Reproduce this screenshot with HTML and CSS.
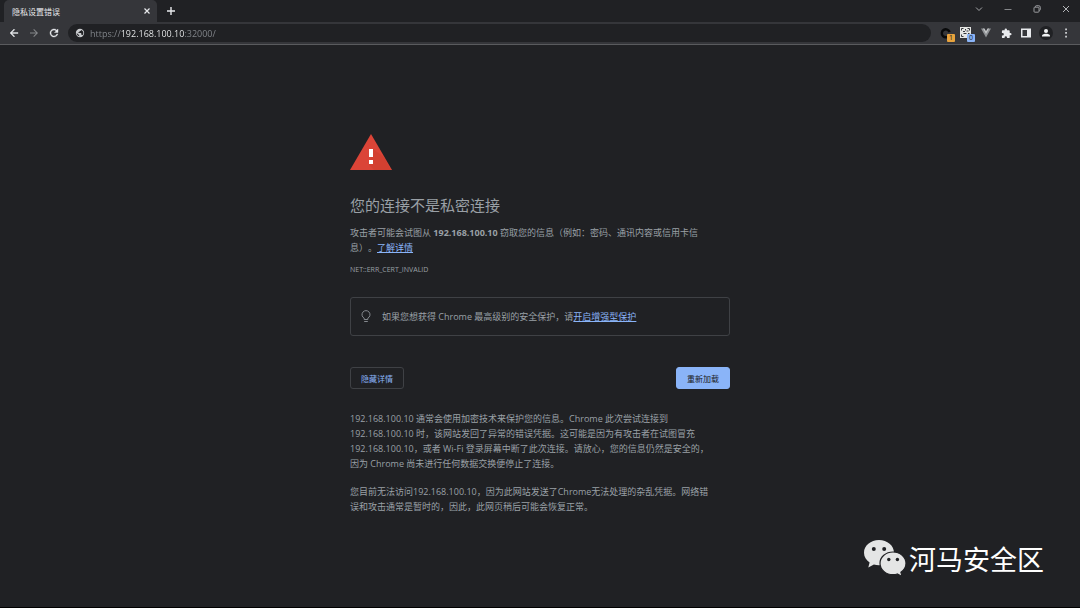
FILE: index.html
```html
<!DOCTYPE html>
<html lang="zh-CN">
<head>
    <meta charset="UTF-8">
    <meta name="viewport" content="width=device-width, initial-scale=1.0">
    <title>隐私设置错误</title>
    <link rel="stylesheet" href="styles.css">
</head>
<body>
    <header class="browser">
        <div class="tab-strip">
            <div class="tab">
                <span class="tab-title">隐私设置错误</span>
                <button class="icon-btn" aria-label="关闭标签页">
                    <svg width="8" height="8" viewBox="0 0 8 8"><path d="M1.5 1.5l5 5M6.500 1.500l-5 5" stroke="#e8eaed" stroke-width="1.2"/></svg>
                </button>
            </div>
            <button class="icon-btn new-tab" aria-label="新标签页">
                <svg width="10" height="10" viewBox="0 0 10 10"><path d="M5 1v8M1 5h8" stroke="#e8eaed" stroke-width="1.4"/></svg>
            </button>
            <div class="window-controls">
                <button class="icon-btn" aria-label="搜索标签页">
                    <svg width="10" height="10" viewBox="0 0 10 10"><path d="M2 3.500l3 3 3-3" fill="none" stroke="#a5a7aa"/></svg>
                </button>
                <button class="icon-btn" aria-label="最小化">
                    <svg width="10" height="10" viewBox="0 0 10 10"><path d="M1.500 5.500h7" stroke="#85878a"/></svg>
                </button>
                <button class="icon-btn" aria-label="还原">
                    <svg width="10" height="10" viewBox="0 0 10 10"><path d="M2 4q0-.8.8-.8h3.400q.8 0 .8.8v3.400q0 .8-.8.8h-3.400q-.8 0-.8-.8zM3.500 3V2.500q0-.8.8-.8h2.400q1.600 0 1.600 1.600v2.200q0 .9-1 .9" fill="none" stroke="#a5a7aa" stroke-width=".9"/></svg>
                </button>
                <button class="icon-btn" aria-label="关闭">
                    <svg width="10" height="10" viewBox="0 0 10 10"><path d="M2 2l6 6M8 2l-6 6" stroke="#c4c6c9" stroke-width=".9"/></svg>
                </button>
            </div>
        </div>

        <div class="toolbar">
            <button class="icon-btn" aria-label="后退">
                <svg width="12" height="12" viewBox="0 0 24 24"><path d="M20 11H7.830l5.590-5.590L12 4l-8 8 8 8 1.410-1.410L7.830 13H20z" fill="#e8eaed" stroke="#e8eaed" stroke-width=".8"/></svg>
            </button>
            <button class="icon-btn" aria-label="前进">
                <svg width="12" height="12" viewBox="0 0 24 24"><path d="M4 11h12.170l-5.590-5.590L12 4l8 8-8 8-1.410-1.410L16.170 13H4z" fill="#85878a"/></svg>
            </button>
            <button class="icon-btn" aria-label="重新加载此页">
                <svg width="12" height="12" viewBox="0 0 24 24"><path d="M17.650 6.350A8 8 0 1 0 19.730 14h-2.080A6 6 0 1 1 12 6c1.660 0 3.140.69 4.220 1.780L13 11h7V4z" fill="#e8eaed" stroke="#e8eaed" stroke-width=".8"/></svg>
            </button>
            <label class="omnibox">
                <svg width="10" height="10" viewBox="0 0 24 24" aria-hidden="true"><path d="M12 2a10 10 0 1 0 0 20 10 10 0 0 0 0-20zM11 19.900C7 19.400 4 16 4 12l5 4v1c0 1 1 2 2 2zm7-2.500c-.3-.8-1-1.400-2-1.400h-1v-3c0-.6-.4-1-1-1H8v-2h2c.6 0 1-.4 1-1V7h2c1.100 0 2-.9 2-2v-.4c3 1.200 5 4 5 7.400 0 2-.8 4-2 5.400z" fill="#c9cbce"/></svg>
                <input class="url" type="text" value="https://192.168.100.10:32000/" aria-label="地址和搜索栏" spellcheck="false">
            </label>
            <div class="extensions">
                <button class="icon-btn ext" aria-label="扩展程序一">
                    <svg width="12" height="12" viewBox="0 0 12 12"><path d="M9.200 8.400A4 4 0 1 1 9.600 5" fill="none" stroke="#08090a" stroke-width="2.400"/></svg>
                    <span class="badge badge-orange">1</span>
                </button>
                <button class="icon-btn ext" aria-label="扩展程序二">
                    <svg width="12" height="12" viewBox="0 0 12 12"><path d="M0 0h11v11H0z" fill="#e4e5e3"/><path d="M1.500 3.500v-2h2M7.500 1.500h2v2M1.500 7.500v2h2M3 4.500h2M6.500 4h2M5.500 2v1.500M3.500 6.500h3M8 6.500h1.500" fill="none" stroke="#34363a"/></svg>
                    <span class="badge badge-blue">0</span>
                </button>
                <button class="icon-btn ext" aria-label="Vue">
                    <svg width="12" height="12" viewBox="0 0 12 12"><path d="M1 1.500h3L6 5l2-3.500h3L6 10.500z" fill="#8e9194"/><path d="M3 1.500h1.500L6 4.200l1.500-2.700H9L6 7z" fill="#c5c7c9"/></svg>
                </button>
                <button class="icon-btn ext" aria-label="扩展程序">
                    <svg width="11" height="11" viewBox="0 0 24 24"><path d="M20.500 11H19V7a2 2 0 0 0-2-2h-4V3.500a2.500 2.500 0 0 0-5 0V5H4a2 2 0 0 0-2 2v3.800h1.500a2.700 2.700 0 0 1 0 5.400H2V20c0 1.100.9 2 2 2h3.800v-1.500a2.700 2.700 0 0 1 5.400 0V22H17a2 2 0 0 0 2-2v-4h1.500a2.500 2.500 0 0 0 0-5z" fill="#e8eaed"/></svg>
                </button>
                <button class="icon-btn ext" aria-label="侧边栏">
                    <svg width="12" height="12" viewBox="0 0 12 12"><path d="M1 1.500h10v9H1zM2.500 3v6H7V3z" fill="#e8eaed" fill-rule="evenodd"/></svg>
                </button>
                <button class="icon-btn ext" aria-label="用户">
                    <svg width="14" height="14" viewBox="0 0 14 14"><circle cx="7" cy="7" r="7" fill="#202124"/><circle cx="7" cy="5" r="2" fill="#f1f3f4"/><path d="M3 10.500V9.700C3 8.400 5.500 7.800 7 7.800s4 .6 4 1.900v.8z" fill="#f1f3f4"/></svg>
                </button>
                <button class="icon-btn ext" aria-label="菜单">
                    <svg width="12" height="12" viewBox="0 0 12 12"><path d="M5.200 1.500h1.700v1.700H5.200zM5.200 5.100h1.700v1.700H5.200zM5.200 8.700h1.700v1.700H5.200z" fill="#d5d7da"/></svg>
                </button>
            </div>
        </div>
    </header>

    <main class="interstitial">
        <svg class="warning-icon" width="42" height="36" viewBox="0 0 42 36" aria-hidden="true">
            <path d="M21 0l21 36H0z" fill="#db4437"/>
            <path d="M23 15l11 8 7 13H24l-5-5z" fill="#c53929" opacity=".35"/>
            <path d="M19 15h4v8h-4zM19 26h4v4h-4z" fill="#fff"/>
        </svg>

        <h1>您的连接不是私密连接</h1>
        <p>攻击者可能会试图从 <strong>192.168.100.10</strong> 窃取您的信息（例如：密码、通讯内容或信用卡信<br>息）。<a href="#">了解详情</a></p>
        <div class="error-code">NET::ERR_CERT_INVALID</div>

        <div class="suggestion">
            <svg width="10" height="14" viewBox="0 0 10 14" aria-hidden="true"><path d="M3.200 9.500V8.200A4 4 0 1 1 6.800 8.200v1.300zM3.200 11.500h3.600" fill="none" stroke="#85898e"/></svg>
            <p>如果您想获得 Chrome 最高级别的安全保护，请<a href="#">开启增强型保护</a></p>
        </div>

        <div class="actions">
            <button class="btn btn-secondary">隐藏详情</button>
            <button class="btn btn-primary">重新加载</button>
        </div>

        <div class="details">
            <p>192.168.100.10 通常会使用加密技术来保护您的信息。Chrome 此次尝试连接到<br>192.168.100.10 时，该网站发回了异常的错误凭据。这可能是因为有攻击者在试图冒充<br>192.168.100.10，或者 Wi-Fi 登录屏幕中断了此次连接。请放心，您的信息仍然是安全的，<br>因为 Chrome 尚未进行任何数据交换便停止了连接。</p>
            <p>您目前无法访问192.168.100.10，因为此网站发送了Chrome无法处理的杂乱凭据。网络错<br>误和攻击通常是暂时的，因此，此网页稍后可能会恢复正常。</p>
        </div>
    </main>

    <div class="watermark">
        <svg width="42" height="37" viewBox="0 0 42 37" aria-hidden="true">
            <path d="M15 0C6.700 0 0 5.600 0 12.700c0 4 2.200 7.500 5.600 9.800L4.300 27.500l5.600-3c1.600.5 3.300.8 5.100.8 8.300 0 15-5.600 15-12.600S23.300 0 15 0z" fill="#e4e5e5"/>
            <path d="M29 12c-7.200 0-13 5-13 11.300s5.800 11.400 13 11.400c1.500 0 3-.2 4.300-.7l4.800 2.600-1.200-4.300c3.100-2.100 5.100-5.300 5.100-9C42 17 36.200 12 29 12z" fill="#e4e5e5" stroke="#202124" stroke-width="1.200"/>
            <g fill="#202124"><circle cx="9.800" cy="9" r="2"/><circle cx="20.200" cy="9" r="2"/><circle cx="24.800" cy="19.500" r="1.700"/><circle cx="33.400" cy="19.500" r="1.700"/></g>
        </svg>
        <span>河马安全区</span>
    </div>
</body>
</html>
```
FILE: styles.css
```css
* {
    box-sizing: border-box;
}
body {
    display: flex;
    flex-direction: column;
    min-height: 100vh;
    margin: 0;
    background-color: #202124;
    border-bottom: 1px solid #000;
    color: #9aa0a6;
    font-family: "Open Sans", "Noto Sans CJK SC", sans-serif;
    font-size: 9px;
    line-height: 15px;
    text-spacing-trim: space-all;
}
svg {
    display: block;
    flex: none;
}
h1, p {
    margin: 0;
}
a {
    color: #8ab4f8;
}
button, input {
    font-family: inherit;
}

/* browser window */
.tab-strip {
    display: flex;
    height: 22px;
}
.tab {
    display: flex;
    align-items: center;
    justify-content: space-between;
    width: 153px;
    margin-left: 4px;
    padding: 0 6px 0 8px;
    background-color: #35363a;
    border-radius: 5px 5px 0 0;
}
.tab-title {
    color: #e8eaed;
    font-size: 8px;
}
.icon-btn {
    display: flex;
    align-items: center;
    justify-content: center;
    padding: 0;
    background: none;
    border: none;
    cursor: pointer;
}
.new-tab {
    margin-left: 9px;
}
.window-controls {
    display: flex;
    gap: 19px;
    height: 18px;
    margin-left: auto;
    padding-right: 9px;
}
.toolbar {
    display: flex;
    align-items: center;
    gap: 8px;
    height: 23px;
    padding: 0 7px 0 8px;
    background-color: #35363a;
    border-bottom: 1px solid #5a5b5e;
}
.omnibox {
    display: flex;
    flex: 1;
    align-items: center;
    gap: 5px;
    height: 18px;
    padding: 0 7px;
    background-color: #202124;
    border-radius: 9px;
}
.url {
    flex: 1;
    padding: 0;
    border: none;
    outline: none;
    background: linear-gradient(90deg, #85898e 31px, #f1f3f4 31px, #f1f3f4 94px, #85898e 94px);
    -webkit-background-clip: text;
    background-clip: text;
    color: transparent;
    font-size: 9px;
}
.extensions {
    display: flex;
    gap: 6px;
}
.ext {
    position: relative;
    width: 14px;
    height: 14px;
}
.badge {
    position: absolute;
    right: -2px;
    bottom: -2px;
    width: 8px;
    height: 8px;
    border-radius: 1px;
    color: #202124;
    font-size: 7px;
    line-height: 8px;
}
.badge-orange {
    background-color: #e8a33d;
}
.badge-blue {
    background-color: #8ab4f8;
}

/* warning page */
.interstitial {
    width: 380px;
    margin: 89px auto 0;
}
h1 {
    margin-top: 24px;
    margin-bottom: 9px;
    font-size: 15px;
    font-weight: 400;
    line-height: 22px;
}
.interstitial p {
    white-space: nowrap;
}
.error-code {
    margin-top: 7px;
    font-size: 7px;
}
.suggestion {
    display: flex;
    align-items: center;
    gap: 11px;
    margin-top: 20px;
    padding: 11px 10px;
    border: 1px solid #3f4145;
    border-radius: 3px;
}
.actions {
    display: flex;
    justify-content: space-between;
    margin-top: 31px;
}
.btn {
    height: 22px;
    padding: 0 10px;
    border: 1px solid #3f4145;
    border-radius: 3px;
    font-size: 8px;
    cursor: pointer;
}
.btn-secondary {
    background: none;
    color: #8ab4f8;
}
.btn-primary {
    background-color: #8ab4f8;
    border-color: #8ab4f8;
    color: #202124;
}
.details {
    display: flex;
    flex-direction: column;
    gap: 13px;
    margin-top: 22px;
}
.watermark {
    position: absolute;
    right: 36px;
    bottom: 28px;
    display: flex;
    align-items: flex-start;
    gap: 3px;
    color: #fff;
    font-size: 27px;
    line-height: 40px;
}
```
